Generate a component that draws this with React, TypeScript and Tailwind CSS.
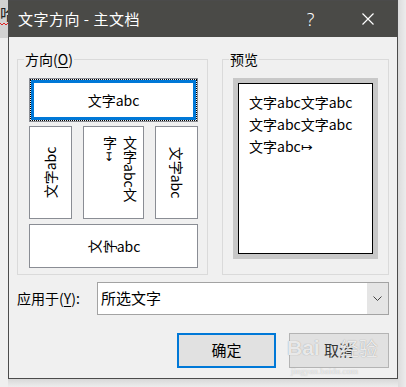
import React from "react";

const cjk = "font-['Noto_Sans_CJK_SC','Noto_Sans',sans-serif]";

function Squiggle() {
  return (
    <svg width="8" height="4" viewBox="0 0 8 4" className="block">
      <polyline points="0,1 2,3 4,1 6,3 8,1" fill="none" stroke="#e02020" strokeWidth="1" />
    </svg>
  );
}

function OptionBox({ className = "", children }: { className?: string; children: React.ReactNode }) {
  return (
    <div className={"border border-[#8a8d94] bg-white " + className}>{children}</div>
  );
}

export default function App() {
  return (
    <div className={"flex w-[406px] h-[387px] bg-[#ececec] overflow-hidden text-black " + cjk}>
      {/* window behind */}
      <div className="w-[8px] flex flex-col">
        <div className="h-[38px] bg-[#d2d2d2] overflow-hidden flex flex-col pt-[4px]">
          <span className="text-[16px] leading-[18px] text-[#222] whitespace-nowrap">哈</span>
          <Squiggle />
        </div>
        <div className="flex-1 bg-[#efefef]" />
      </div>

      <div className="w-[390px] flex flex-col">
        <div className="h-[379px] border border-[#4b4b4b] bg-[#f0f0f0] flex flex-col">
          {/* title bar */}
          <div className="h-[36px] bg-[#4a4a47] flex items-center pl-[9px] pr-[1px] text-white">
            <span className="text-[15px] tracking-[0.5px]">文字方向 - 主文档</span>
            <div className="ml-auto flex h-full">
              <div className="w-[56px] flex items-center justify-center pr-[3px] text-[18px] font-['Noto_Sans',sans-serif] font-light">?</div>
              <div className="w-[56px] flex items-center justify-center">
                <svg width="12" height="12" viewBox="0 0 12 12">
                  <path d="M0.5 0.5 L11.5 11.5 M11.5 0.5 L0.5 11.5" stroke="#fff" strokeWidth="1.2" />
                </svg>
              </div>
            </div>
          </div>

          {/* body */}
          <div className="flex-1 px-[8px] flex flex-col">
            <div className="mt-[12px] flex gap-[14px]">
              <fieldset className="w-[191px] h-[226px] border border-[#dadada]">
                <legend className="ml-[6px] px-[1px] text-[14px] leading-[20px]">
                  方向(<span className="underline underline-offset-2">O</span>)
                </legend>
                <div className="pt-[9px] pl-[11px] pr-[9px] flex flex-col">
                  <div className="h-[44px] border border-[#8a8d94]">
                    <div className="h-full border border-dotted border-black">
                      <div className="h-full border-[3px] border-[#0078d7] bg-white flex items-center justify-center text-[14px]">
                        文字abc
                      </div>
                    </div>
                  </div>

                  <div className="mt-[4px] h-[93px] flex justify-between">
                    <OptionBox className="w-[43px] bg-[#f5f5f5] p-[4px]">
                      <div className="h-full bg-white flex items-center justify-center">
                        <span className="-rotate-90 whitespace-nowrap text-[14px]">文字abc</span>
                      </div>
                    </OptionBox>
                    <OptionBox className="w-[61px] flex flex-row-reverse items-start pt-[9px] pr-[4px] text-[14px]">
                      <span className="[writing-mode:vertical-rl] leading-[19px]">文字abc文</span>
                      <span className="[writing-mode:vertical-rl] leading-[19px]">
                        字<span className="[text-orientation:upright] text-[12px]">↧</span>
                      </span>
                    </OptionBox>
                    <OptionBox className="w-[43px] bg-[#f5f5f5] p-[4px]">
                      <div className="h-full bg-white flex items-center justify-center">
                        <span className="rotate-90 whitespace-nowrap text-[14px]">文字abc</span>
                      </div>
                    </OptionBox>
                  </div>

                  <OptionBox className="mt-[5px] h-[44px] flex items-center justify-center text-[14px]">
                    <span className="inline-block -rotate-90 mr-[1px]">文</span>
                    <span className="inline-block -rotate-90 mr-[1px]">字</span>
                    <span>abc</span>
                  </OptionBox>
                </div>
              </fieldset>

              <fieldset className="w-[167px] h-[226px] border border-[#dadada]">
                <legend className="ml-[6px] px-[1px] text-[14px] leading-[20px]">预览</legend>
                <div className="pt-[9px] px-[10px]">
                  <div className="h-[181px] bg-[#c8c8c8] p-[5px]">
                    <div className="h-full border border-black bg-white pt-[7px] pl-[10px] text-[14px] leading-[22px]">
                      <div>文字abc文字abc</div>
                      <div>文字abc文字abc</div>
                      <div>文字abc↦</div>
                    </div>
                  </div>
                </div>
              </fieldset>
            </div>

            {/* apply to */}
            <div className="mt-[7px] flex items-center">
              <span className="w-[80px] text-[14px]">
                应用于(<span className="underline underline-offset-2">Y</span>):
              </span>
              <div className="w-[292px] h-[33px] border border-[#a3a3a3] bg-white flex">
                <span className="flex-1 flex items-center pl-[3px] text-[15px]">所选文字</span>
                <div className="w-[21px] bg-[#e5e5e5] flex items-center justify-center">
                  <svg width="9" height="5" viewBox="0 0 9 5">
                    <polyline points="0.5,0.5 4.5,4.5 8.5,0.5" fill="none" stroke="#444" strokeWidth="1" />
                  </svg>
                </div>
              </div>
            </div>

            {/* buttons */}
            <div className="mt-[18px] flex justify-end gap-[13px]">
              <button className="w-[99px] h-[35px] border-2 border-[#0078d7] bg-[#e1e1e1] text-[15px]">确定</button>
              <div className="relative">
                <button className="w-[100px] h-[35px] border border-[#b4b4b4] bg-[#e1e1e1] text-[15px] text-[#333]">取消</button>
                {/* watermark */}
                <div className="absolute left-[-2px] top-[3px] flex items-end pointer-events-none text-white/80 [text-shadow:0_0_1px_#8a8a8a]">
                  <span className="font-['Liberation_Sans',sans-serif] font-bold text-[21px] leading-[24px]">Bai</span>
                  <span className="ml-[20px] text-[19px] leading-[24px]">经验</span>
                </div>
                <span className="absolute left-[2px] top-[33px] text-[9px] leading-[10px] text-white/70 [text-shadow:0_0_1px_#aaa] font-['Liberation_Serif',serif] pointer-events-none">
                  jingyan.baidu.com
                </span>
              </div>
            </div>
          </div>
        </div>
        <div className="flex-1 bg-gradient-to-b from-[#d8d8d8] to-[#ededed]" />
      </div>

      <div className="flex-1 bg-gradient-to-r from-[#dcdcdc] to-[#ececec]" />
    </div>
  );
}
